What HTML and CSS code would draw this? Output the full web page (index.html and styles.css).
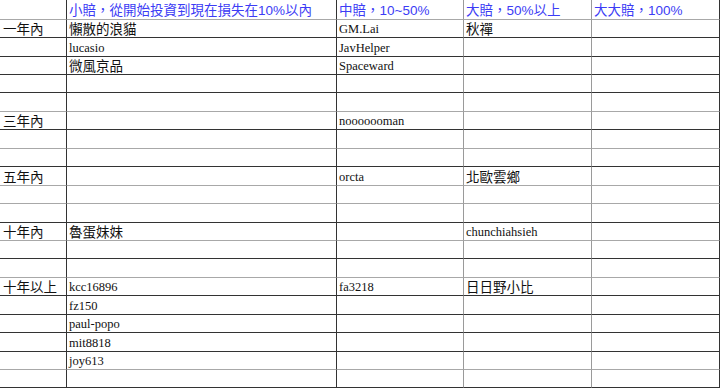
FILE: index.html
```html
<!DOCTYPE html>
<html lang="zh-Hant">
<head>
<meta charset="utf-8">
<title>賠錢表</title>
<link rel="stylesheet" href="styles.css">
</head>
<body>
<div class="sheet">
  <div class="row g"><div class="cell"></div><div class="cell head">小賠，從開始投資到現在損失在10%以內</div><div class="cell head">中賠，10~50%</div><div class="cell head">大賠，50%以上</div><div class="cell head">大大賠，100%</div></div>
  <div class="row"><div class="cell zh">一年內</div><div class="cell zh">懶散的浪貓</div><div class="cell">GM.Lai</div><div class="cell zh">秋禪</div><div class="cell"></div></div>
  <div class="row"><div class="cell"></div><div class="cell">lucasio</div><div class="cell">JavHelper</div><div class="cell"></div><div class="cell"></div></div>
  <div class="row"><div class="cell"></div><div class="cell zh">微風京品</div><div class="cell">Spaceward</div><div class="cell"></div><div class="cell"></div></div>
  <div class="row"><div class="cell"></div><div class="cell"></div><div class="cell"></div><div class="cell"></div><div class="cell"></div></div>
  <div class="row g"><div class="cell"></div><div class="cell"></div><div class="cell"></div><div class="cell"></div><div class="cell"></div></div>
  <div class="row"><div class="cell zh">三年內</div><div class="cell"></div><div class="cell">nooooooman</div><div class="cell"></div><div class="cell"></div></div>
  <div class="row g"><div class="cell"></div><div class="cell"></div><div class="cell"></div><div class="cell"></div><div class="cell"></div></div>
  <div class="row"><div class="cell"></div><div class="cell"></div><div class="cell"></div><div class="cell"></div><div class="cell"></div></div>
  <div class="row g"><div class="cell zh">五年內</div><div class="cell"></div><div class="cell">orcta</div><div class="cell zh">北歐雲鄉</div><div class="cell"></div></div>
  <div class="row g"><div class="cell"></div><div class="cell"></div><div class="cell"></div><div class="cell"></div><div class="cell"></div></div>
  <div class="row"><div class="cell"></div><div class="cell"></div><div class="cell"></div><div class="cell"></div><div class="cell"></div></div>
  <div class="row g"><div class="cell zh">十年內</div><div class="cell zh">魯蛋妹妹</div><div class="cell"></div><div class="cell">chunchiahsieh</div><div class="cell"></div></div>
  <div class="row"><div class="cell"></div><div class="cell"></div><div class="cell"></div><div class="cell"></div><div class="cell"></div></div>
  <div class="row g"><div class="cell"></div><div class="cell"></div><div class="cell"></div><div class="cell"></div><div class="cell"></div></div>
  <div class="row"><div class="cell zh">十年以上</div><div class="cell">kcc16896</div><div class="cell">fa3218</div><div class="cell zh">日日野小比</div><div class="cell"></div></div>
  <div class="row"><div class="cell"></div><div class="cell">fz150</div><div class="cell"></div><div class="cell"></div><div class="cell"></div></div>
  <div class="row"><div class="cell"></div><div class="cell">paul-popo</div><div class="cell"></div><div class="cell"></div><div class="cell"></div></div>
  <div class="row"><div class="cell"></div><div class="cell">mit8818</div><div class="cell"></div><div class="cell"></div><div class="cell"></div></div>
  <div class="row g"><div class="cell"></div><div class="cell">joy613</div><div class="cell"></div><div class="cell"></div><div class="cell"></div></div>
  <div class="row"><div class="cell"></div><div class="cell"></div><div class="cell"></div><div class="cell"></div><div class="cell"></div></div>
</div>
</body>
</html>
```

FILE: styles.css
```css
html, body {
  margin: 0;
  padding: 0;
  background: #ffffff;
}

.sheet {
  display: grid;
  width: 720px;
  grid-template-columns: 67px 270px 127px 128px 128px;
  grid-template-rows: 20px 18px 19px 18px 18px 19px 18px 19px 18px 19px 18px 19px 18px 18px 19px 18px 19px 18px 19px 18px 18px;
  font-family: "Liberation Serif", "Noto Sans CJK TC", serif;
  font-size: 12.5px;
  color: #111111;
}

.row {
  display: contents;
}

.cell {
  box-sizing: border-box;
  border-right: 1px solid #333333;
  border-bottom: 1px solid #333333;
  padding: 0 2px 0 2px;
  display: flex;
  align-items: flex-end;
  line-height: 15px;
  white-space: nowrap;
  font-size: 12.5px;
  min-width: 0;
}

.cell:first-child {
  padding-left: 3px;
}

.row.g > .cell {
  border-bottom-color: #a8a8a8;
}

.cell:nth-child(3),
.cell:nth-child(4) {
  border-right-color: #9a9a9a;
}

.zh {
  font-family: "Noto Sans CJK TC", sans-serif;
  font-size: 13.5px;
  line-height: 16px;
  padding-bottom: 1px;
}

.head {
  color: #3c3cf5;
  font-family: "Liberation Sans", "Noto Sans CJK TC", sans-serif;
  font-size: 13.5px;
  line-height: 17px;
}
```
